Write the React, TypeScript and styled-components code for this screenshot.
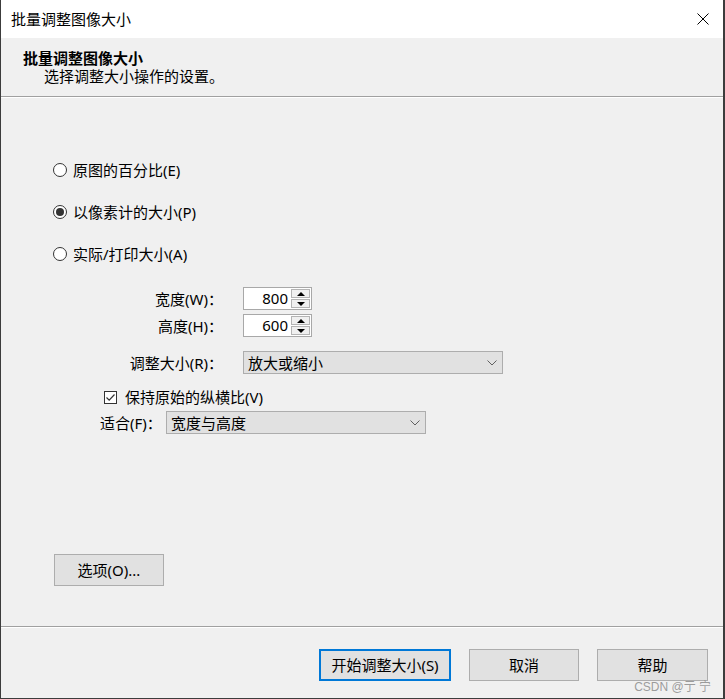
import React from "react";
import styled, { createGlobalStyle } from "styled-components";

const FONT = `"Noto Sans", "Noto Sans CJK SC", sans-serif`;

const Global = createGlobalStyle`
  html, body { margin: 0; padding: 0; background: #f0f0f0; }
  body { font-family: ${FONT}; }
  * { box-sizing: border-box; }
`;

const Window = styled.div`
  width: 725px;
  height: 699px;
  display: flex;
  flex-direction: column;
  background: #f0f0f0;
  border-left: 1px solid #3c3c3c;
  border-right: 2px solid #3c3c3c;
  border-bottom: 1px solid #3c3c3c;
  color: #000;
  font-family: ${FONT};
  font-size: 15px;
`;

const TitleBar = styled.div`
  height: 38px;
  flex: none;
  display: flex;
  align-items: center;
  justify-content: space-between;
  background: #fff;
  padding: 0 14px 0 10px;
`;

const TitleText = styled.span`
  font-size: 15px;
  line-height: 20px;
`;

const CloseIcon = styled.svg`
  width: 12px;
  height: 12px;
  display: block;
`;

const Header = styled.div`
  height: 58px;
  flex: none;
  padding: 11px 0 0 22px;
  background: #f0f0f0;
`;

const HeaderTitle = styled.div`
  font-size: 15px;
  font-weight: 700;
  line-height: 18px;
`;

const HeaderSub = styled.div`
  font-size: 15px;
  line-height: 19px;
  padding-left: 21px;
`;

const Rule = styled.div`
  height: 2px;
  flex: none;
  border-top: 1px solid #a0a0a0;
  border-bottom: 1px solid #ffffff;
`;

const Body = styled.div`
  flex: 1;
  display: flex;
  flex-direction: column;
  padding: 62px 0 40px 52px;
`;

const RadioGroup = styled.div`
  display: flex;
  flex-direction: column;
  gap: 22px;
`;

const OptionRow = styled.label`
  display: flex;
  align-items: center;
  height: 20px;
  line-height: 20px;
  gap: 6px;
`;

const RadioCircle = styled.span<{ $checked?: boolean }>`
  width: 14px;
  height: 14px;
  border-radius: 50%;
  border: 1px solid #333;
  background: #fff;
  display: flex;
  align-items: center;
  justify-content: center;
  flex: none;
  &::after {
    content: "";
    width: 8px;
    height: 8px;
    border-radius: 50%;
    background: #333;
    display: ${(p) => (p.$checked ? "block" : "none")};
  }
`;

const FieldRow = styled.div<{ $gap: number }>`
  display: grid;
  grid-template-columns: 170px auto;
  column-gap: 20px;
  align-items: center;
  margin-top: ${(p) => p.$gap}px;
`;

const FieldLabel = styled.span`
  text-align: right;
  line-height: 20px;
  white-space: nowrap;
`;

const SpinBox = styled.div`
  display: flex;
  width: 69px;
  height: 23px;
  border: 1px solid #a8a8a8;
  background: #fff;
`;

const SpinValue = styled.div`
  flex: 1;
  text-align: right;
  padding-right: 3px;
  line-height: 21px;
`;

const SpinButtons = styled.div`
  width: 20px;
  display: flex;
  flex-direction: column;
  padding: 1px 1px 1px 0;
  gap: 1px;
`;

const SpinButton = styled.div`
  flex: 1;
  background: #f0f0f0;
  border: 1px solid #b4b4b4;
  display: flex;
  align-items: center;
  justify-content: center;
`;

const Triangle = styled.span<{ $up?: boolean }>`
  width: 0;
  height: 0;
  border-left: 4px solid transparent;
  border-right: 4px solid transparent;
  ${(p) =>
    p.$up ? "border-bottom: 4px solid #000;" : "border-top: 4px solid #000;"}
`;

const Select = styled.div<{ $width: number }>`
  display: flex;
  align-items: center;
  justify-content: space-between;
  width: ${(p) => p.$width}px;
  height: 23px;
  background: #e1e1e1;
  border: 1px solid #adadad;
  padding: 0 5px 0 4px;
  line-height: 20px;
`;

const Chevron = styled.svg`
  width: 10px;
  height: 6px;
  display: block;
`;

const CheckRow = styled.label`
  display: flex;
  align-items: center;
  gap: 8px;
  height: 20px;
  line-height: 20px;
  margin: 13px 0 0 51px;
`;

const CheckBox = styled.span`
  width: 13px;
  height: 13px;
  border: 1px solid #333;
  background: #fff;
  display: flex;
  align-items: center;
  justify-content: center;
  flex: none;
`;

const FitRow = styled.div`
  display: flex;
  align-items: center;
  margin: 4px 0 0 47px;
`;

const FitLabel = styled.span`
  width: 66px;
  line-height: 20px;
  white-space: nowrap;
`;

const Button = styled.button<{ $width: number; $primary?: boolean }>`
  width: ${(p) => p.$width}px;
  height: 32px;
  background: #e1e1e1;
  border: ${(p) => (p.$primary ? "2px solid #0078d7" : "1px solid #adadad")};
  font-family: ${FONT};
  font-size: 15px;
  color: #000;
  padding: 0;
  line-height: 20px;
`;

const OptionsButton = styled(Button)`
  margin-top: auto;
  margin-left: 1px;
`;

const Footer = styled.div`
  height: 70px;
  flex: none;
  position: relative;
  display: flex;
  justify-content: flex-end;
  align-items: flex-start;
  gap: 18px;
  padding: 21px 15px 0 0;
`;

const Watermark = styled.span`
  position: absolute;
  right: 12px;
  bottom: 4px;
  font-family: "Liberation Sans", "Noto Sans CJK SC", sans-serif;
  font-size: 12px;
  color: rgba(140, 140, 140, 0.85);
  line-height: 14px;
`;

const ChevronDown = () => (
  <Chevron viewBox="0 0 10 6">
    <polyline points="0.5,0.5 5,5 9.5,0.5" fill="none" stroke="#606060" strokeWidth="1" />
  </Chevron>
);

export default function App() {
  return (
    <>
      <Global />
      <Window>
        <TitleBar>
          <TitleText>批量调整图像大小</TitleText>
          <CloseIcon viewBox="0 0 12 12">
            <line x1="0.5" y1="0.5" x2="11.5" y2="11.5" stroke="#000" strokeWidth="1" />
            <line x1="11.5" y1="0.5" x2="0.5" y2="11.5" stroke="#000" strokeWidth="1" />
          </CloseIcon>
        </TitleBar>
        <Header>
          <HeaderTitle>批量调整图像大小</HeaderTitle>
          <HeaderSub>选择调整大小操作的设置。</HeaderSub>
        </Header>
        <Rule />
        <Body>
          <RadioGroup>
            <OptionRow>
              <RadioCircle />
              原图的百分比(E)
            </OptionRow>
            <OptionRow>
              <RadioCircle $checked />
              以像素计的大小(P)
            </OptionRow>
            <OptionRow>
              <RadioCircle />
              实际/打印大小(A)
            </OptionRow>
          </RadioGroup>

          <FieldRow $gap={23}>
            <FieldLabel>宽度(W)：</FieldLabel>
            <SpinBox>
              <SpinValue>800</SpinValue>
              <SpinButtons>
                <SpinButton><Triangle $up /></SpinButton>
                <SpinButton><Triangle /></SpinButton>
              </SpinButtons>
            </SpinBox>
          </FieldRow>
          <FieldRow $gap={4}>
            <FieldLabel>高度(H)：</FieldLabel>
            <SpinBox>
              <SpinValue>600</SpinValue>
              <SpinButtons>
                <SpinButton><Triangle $up /></SpinButton>
                <SpinButton><Triangle /></SpinButton>
              </SpinButtons>
            </SpinBox>
          </FieldRow>
          <FieldRow $gap={14}>
            <FieldLabel>调整大小(R)：</FieldLabel>
            <Select $width={260}>
              <span>放大或缩小</span>
              <ChevronDown />
            </Select>
          </FieldRow>

          <CheckRow>
            <CheckBox>
              <svg width="11" height="11" viewBox="0 0 11 11">
                <polyline points="1.5,5.5 4.2,8.2 9.5,2.5" fill="none" stroke="#333" strokeWidth="1.2" />
              </svg>
            </CheckBox>
            保持原始的纵横比(V)
          </CheckRow>
          <FitRow>
            <FitLabel>适合(F)：</FitLabel>
            <Select $width={260}>
              <span>宽度与高度</span>
              <ChevronDown />
            </Select>
          </FitRow>

          <OptionsButton $width={110}>选项(O)...</OptionsButton>
        </Body>
        <Rule />
        <Footer>
          <Button $width={132} $primary>开始调整大小(S)</Button>
          <Button $width={110}>取消</Button>
          <Button $width={111}>帮助</Button>
          <Watermark>CSDN @亍 宁</Watermark>
        </Footer>
      </Window>
    </>
  );
}
